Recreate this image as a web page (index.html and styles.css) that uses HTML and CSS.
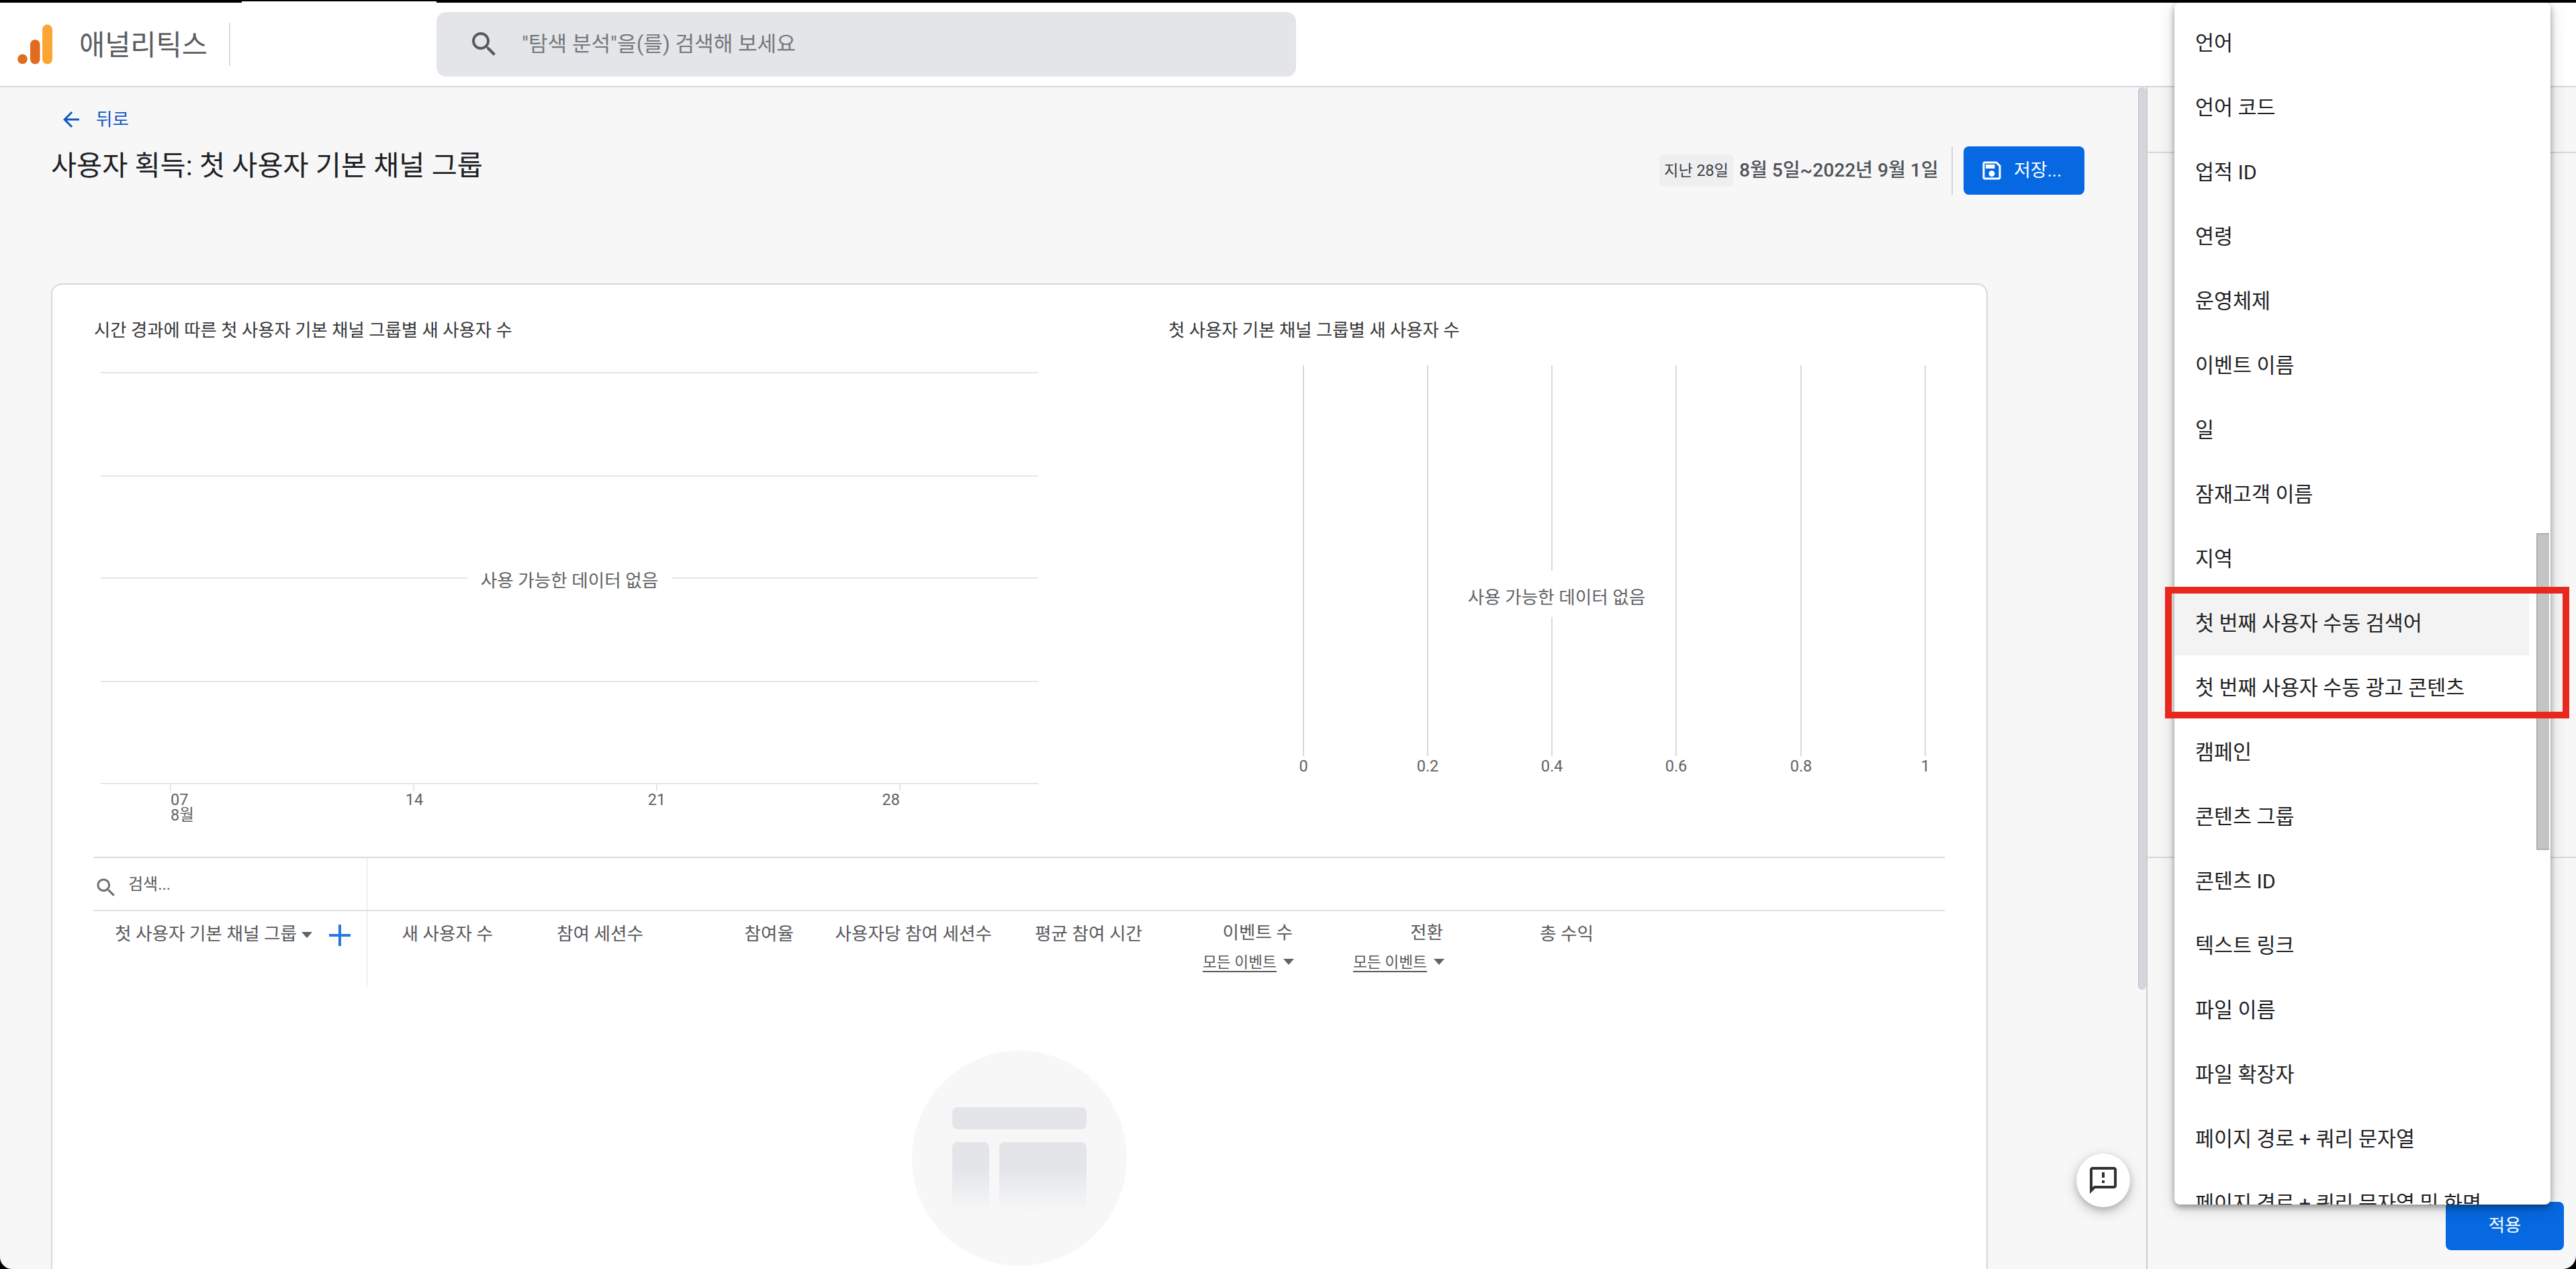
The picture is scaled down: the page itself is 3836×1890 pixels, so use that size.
FILE: index.html
```html
<!DOCTYPE html>
<html lang="ko">
<head>
  <meta charset="UTF-8">
  <meta name="viewport" content="width=device-width, initial-scale=1.0">
  <title>애널리틱스</title>
  <link rel="stylesheet" href="styles.css">
</head>
<body>
  <div class="tab-strip"><div class="active-tab"></div></div>
  <div class="window">
    <header class="header">
      <svg class="logo" width="52" height="60" viewBox="0 0 52 60">
        <circle cx="7.5" cy="52" r="7.3" fill="#e06c22"/>
        <rect x="19" y="23" width="14.5" height="36.5" rx="7.2" fill="#e06c22"/>
        <rect x="37" y="0.5" width="15" height="59" rx="7.5" fill="#fba634"/>
      </svg>
      <span class="brand">애널리틱스</span>
      <div class="search">
        <svg class="search-icon" width="48" height="48" viewBox="0 0 24 24" fill="#57595c">
          <path d="M15.5 14h-.79l-.28-.27C15.41 12.59 16 11.11 16 9.5 16 5.91 13.09 3 9.5 3S3 5.91 3 9.5 5.91 16 9.5 16c1.61 0 3.09-.59 4.23-1.57l.27.28v.79l5 4.99L20.49 19l-4.99-5zm-6 0C7.01 14 5 11.99 5 9.5S7.01 5 9.5 5 14 7.01 14 9.5 11.99 14 9.5 14z"/>
        </svg>
        <span>"탐색 분석"을(를) 검색해 보세요</span>
      </div>
    </header>

    <div class="body">
      <main class="main">
        <a class="back">
          <svg width="36" height="36" viewBox="0 0 24 24" fill="#1259c3">
            <path d="M20 11H7.83l5.59-5.59L12 4l-8 8 8 8 1.41-1.41L7.83 13H20v-2z"/>
          </svg>
          <span>뒤로</span>
        </a>
        <div class="title-row">
          <h1>사용자 획득: 첫 사용자 기본 채널 그룹</h1>
          <div class="actions">
            <span class="chip">지난 28일</span>
            <span class="date">8월 5일~2022년 9월 1일</span>
            <button class="save">
              <svg width="36" height="36" viewBox="0 0 24 24" fill="#fff">
                <path d="M17 3H5c-1.11 0-2 .9-2 2v14c0 1.1.89 2 2 2h14c1.1 0 2-.9 2-2V7l-4-4zm2 16H5V5h11.17L19 7.83V19zm-7-7c-1.66 0-3 1.34-3 3s1.34 3 3 3 3-1.34 3-3-1.34-3-3-3zM6 6h9v4H6z"/>
              </svg>
              <span>저장...</span>
            </button>
          </div>
        </div>

        <section class="card">
          <div class="charts">
            <div class="chart chart-line">
              <h2>시간 경과에 따른 첫 사용자 기본 채널 그룹별 새 사용자 수</h2>
              <svg width="1420" height="700" viewBox="0 0 1420 700">
                <g fill="#e6e6e6">
                  <rect x="10" y="36" width="1396" height="2"/>
                  <rect x="10" y="190" width="1396" height="2"/>
                  <rect x="10" y="342" width="546" height="2"/>
                  <rect x="860" y="342" width="546" height="2"/>
                  <rect x="10" y="496" width="1396" height="2"/>
                  <rect x="10" y="648" width="1396" height="2"/>
                  <rect x="113" y="650" width="2" height="10"/>
                  <rect x="475" y="650" width="2" height="10"/>
                  <rect x="837" y="650" width="2" height="10"/>
                  <rect x="1199" y="650" width="2" height="10"/>
                </g>
                <text class="no-data" x="708" y="356" text-anchor="middle">사용 가능한 데이터 없음</text>
                <g class="axis">
                  <text x="114" y="681">07</text>
                  <text x="114" y="704">8월</text>
                  <text x="477" y="681" text-anchor="middle">14</text>
                  <text x="838" y="681" text-anchor="middle">21</text>
                  <text x="1200" y="681" text-anchor="end">28</text>
                </g>
              </svg>
            </div>
            <div class="chart chart-bar">
              <h2>첫 사용자 기본 채널 그룹별 새 사용자 수</h2>
              <svg width="1156" height="700" viewBox="0 0 1156 700">
                <g fill="#d9d9d9">
                  <rect x="200" y="26" width="2" height="582"/>
                  <rect x="385" y="26" width="2" height="582"/>
                  <rect x="570" y="26" width="2" height="306"/>
                  <rect x="570" y="401" width="2" height="207"/>
                  <rect x="755" y="26" width="2" height="582"/>
                  <rect x="941" y="26" width="2" height="582"/>
                  <rect x="1126" y="26" width="2" height="582"/>
                </g>
                <text class="no-data" x="578" y="381" text-anchor="middle">사용 가능한 데이터 없음</text>
                <g class="axis" text-anchor="middle">
                  <text x="201" y="631">0</text>
                  <text x="386" y="631">0.2</text>
                  <text x="571" y="631">0.4</text>
                  <text x="756" y="631">0.6</text>
                  <text x="942" y="631">0.8</text>
                  <text x="1127" y="631">1</text>
                </g>
              </svg>
            </div>
          </div>

          <div class="table">
            <div class="table-search">
              <div class="dimension-col">
                <svg width="36" height="36" viewBox="0 0 24 24" fill="#6d7073">
                  <path d="M15.5 14h-.79l-.28-.27C15.41 12.59 16 11.11 16 9.5 16 5.91 13.09 3 9.5 3S3 5.91 3 9.5 5.91 16 9.5 16c1.61 0 3.09-.59 4.23-1.57l.27.28v.79l5 4.99L20.49 19l-4.99-5zm-6 0C7.01 14 5 11.99 5 9.5S7.01 5 9.5 5 14 7.01 14 9.5 11.99 14 9.5 14z"/>
                </svg>
                <span>검색...</span>
              </div>
            </div>
            <div class="table-head">
              <div class="dimension-col">
                <span>첫 사용자 기본 채널 그룹</span>
                <i class="caret"></i>
                <i class="plus"></i>
              </div>
              <div class="col col-first">새 사용자 수</div>
              <div class="col">참여 세션수</div>
              <div class="col">참여율</div>
              <div class="col col-wide">사용자당 참여 세션수</div>
              <div class="col">평균 참여 시간</div>
              <div class="col col-event">이벤트 수<div class="event"><u>모든 이벤트</u><i class="caret"></i></div></div>
              <div class="col col-event">전환<div class="event"><u>모든 이벤트</u><i class="caret"></i></div></div>
              <div class="col">총 수익</div>
            </div>
          </div>

          <svg class="empty" width="320" height="320" viewBox="0 0 320 320">
            <defs>
              <linearGradient id="fade" x1="0" y1="0" x2="0" y2="1">
                <stop offset="0.38" stop-color="#e3e5e9"/>
                <stop offset="1" stop-color="#f7f7f8"/>
              </linearGradient>
            </defs>
            <circle cx="160" cy="160" r="160" fill="#f7f7f8"/>
            <rect x="60" y="84" width="200" height="33" rx="8" fill="#e3e5e9"/>
            <rect x="60" y="136" width="55" height="104" rx="8" fill="url(#fade)"/>
            <rect x="130" y="136" width="130" height="104" rx="8" fill="url(#fade)"/>
          </svg>
        </section>
      </main>

      <div class="scrollbar"><div class="scroll-thumb"></div></div>

      <aside class="side">
        <div class="side-title"></div>
        <div class="side-section"></div>
        <button class="apply">적용</button>
      </aside>
    </div>

    <button class="feedback">
      <svg width="48" height="48" viewBox="0 0 24 24" fill="#303134">
        <path d="M20 2H4c-1.1 0-1.99.9-1.99 2L2 22l4-4h14c1.1 0 2-.9 2-2V4c0-1.1-.9-2-2-2zm0 14H5.17L4 17.17V4h16v12zm-9-4h2v2h-2zm0-6h2v4h-2z"/>
      </svg>
    </button>

    <div class="menu">
      <ul>
        <li>언어</li>
        <li>언어 코드</li>
        <li>업적 ID</li>
        <li>연령</li>
        <li>운영체제</li>
        <li>이벤트 이름</li>
        <li>일</li>
        <li>잠재고객 이름</li>
        <li>지역</li>
        <li class="active">첫 번째 사용자 수동 검색어</li>
        <li>첫 번째 사용자 수동 광고 콘텐츠</li>
        <li>캠페인</li>
        <li>콘텐츠 그룹</li>
        <li>콘텐츠 ID</li>
        <li>텍스트 링크</li>
        <li>파일 이름</li>
        <li>파일 확장자</li>
        <li>페이지 경로 + 쿼리 문자열</li>
        <li>페이지 경로 + 쿼리 문자열 및 화면</li>
      </ul>
      <div class="menu-thumb"></div>
    </div>
    <div class="highlight"></div>
  </div>
</body>
</html>
```

FILE: styles.css
```css
* {
  box-sizing: border-box;
}
body {
  margin: 0;
  height: 1890px;
  overflow: hidden;
  background: #000;
  font-family: Roboto, "Noto Sans CJK KR", sans-serif;
  font-size: 26.6px;
  line-height: 1.2;
  color: #202124;
}
h1, h2, ul {
  margin: 0;
  padding: 0;
  font-weight: 400;
}
button {
  border: none;
  padding: 0;
  font-family: inherit;
  line-height: 1.2;
}
svg {
  display: block;
  flex: none;
}
.tab-strip {
  height: 4px;
  padding: 2px 0 0 360px;
}
.active-tab {
  width: 290px;
  height: 2px;
  background: #fff;
}
.window {
  position: relative;
  height: 1886px;
  overflow: hidden;
  display: flex;
  flex-direction: column;
  background: #f7f7f8;
  border-radius: 0 0 20px 18px;
}

/* header */
.header {
  flex: none;
  height: 126px;
  display: flex;
  align-items: flex-start;
  background: #fff;
  border-bottom: 2px solid #d3d6da;
}
.logo {
  margin: 32px 0 0 26px;
}
.brand {
  width: 225px;
  height: 64px;
  margin: 30px 0 0 40px;
  border-right: 2px solid #dadce0;
  line-height: 67px;
  font-size: 41.5px;
  color: #5a5c5f;
}
.search {
  width: 1280px;
  height: 96px;
  margin: 14px 0 0 307px;
  padding-left: 47px;
  display: flex;
  align-items: center;
  gap: 32px;
  border-radius: 14px;
  background: #e3e5e9;
  font-size: 31.1px;
  color: #75787b;
}

/* report */
.body {
  flex: 1;
  min-height: 0;
  display: flex;
}
.main {
  width: 3184px;
  padding-left: 76px;
}
.back {
  height: 60px;
  margin-top: 18px;
  padding-left: 12px;
  display: flex;
  align-items: center;
  gap: 19px;
  font-size: 26.6px;
  color: #1259c3;
}
.title-row {
  width: 3028px;
  height: 92px;
  margin-top: 4px;
  display: flex;
  justify-content: space-between;
}
.title-row h1 {
  line-height: 70px;
  font-size: 41.4px;
}
.actions {
  height: 72px;
  margin-top: 6px;
  display: flex;
  align-items: center;
}
.chip {
  width: 110px;
  height: 48px;
  border-radius: 6px;
  background: #eeeff1;
  line-height: 48px;
  text-align: center;
  font-size: 23.2px;
  color: #3c4043;
}
.date {
  width: 327px;
  height: 72px;
  padding-left: 9px;
  border-right: 2px solid #d3d6da;
  line-height: 72px;
  white-space: nowrap;
  font-size: 28.1px;
  font-weight: 500;
  color: #505357;
}
.save {
  width: 180px;
  height: 72px;
  margin-left: 16px;
  padding-left: 24px;
  display: flex;
  align-items: center;
  gap: 15px;
  border-radius: 8px;
  background: #0669e1;
  color: #fff;
  font-size: 27px;
}

/* card */
.card {
  width: 2884px;
  height: 1500px;
  margin-top: 118px;
  padding: 0 62px;
  border: 2px solid #d5d7d9;
  border-radius: 16px;
  background: #fff;
}
.charts {
  height: 852px;
  padding-top: 44px;
  display: flex;
  gap: 180px;
}
.chart h2 {
  height: 50px;
  line-height: 48px;
  font-size: 26.35px;
  color: #35373a;
}
.chart svg {
  overflow: visible;
}
.no-data {
  font-size: 26.6px;
  fill: #616366;
}
.axis {
  font-size: 23.5px;
  fill: #5f6164;
}

/* table */
.table {
  width: 2756px;
  border-top: 2px solid #d9d9d9;
  color: #57595c;
}
.table-search {
  height: 79px;
  display: flex;
  border-bottom: 2px solid #e0e0e0;
}
.table-search .dimension-col {
  gap: 15px;
  padding-top: 2px;
  font-size: 24px;
}
.table-search svg {
  margin-top: 8px;
}
.table-head {
  height: 113px;
  display: flex;
  line-height: 68px;
}
.dimension-col {
  flex: none;
  width: 407px;
  display: flex;
  align-items: center;
  border-right: 1px solid #e0e0e0;
}
.table-head .dimension-col {
  align-items: flex-start;
  padding-left: 31px;
}
.caret {
  border: 8px solid transparent;
  border-top: 9px solid #616366;
  border-bottom: 0;
}
.dimension-col .caret {
  margin: 31px 0 0 7px;
}
.plus {
  width: 32px;
  height: 32px;
  margin: 20px 0 0 25px;
  background:
    linear-gradient(#2577e3, #2577e3) center / 4px 100% no-repeat,
    linear-gradient(#2577e3, #2577e3) center / 100% 4px no-repeat;
}
.col {
  flex: none;
  width: 224px;
  text-align: right;
}
.col-first {
  width: 187px;
}
.col-wide {
  width: 295px;
}
.col-event {
  padding-top: 14px;
  line-height: 36px;
}
.event {
  height: 40px;
  margin: 8px -2px 0 0;
  display: flex;
  justify-content: flex-end;
  align-items: center;
  gap: 10px;
  font-size: 22.7px;
}
.event u {
  line-height: 24px;
  border-bottom: 2px solid #57595c;
  text-decoration: none;
}
.event .caret {
  margin-bottom: 6px;
}
.empty {
  margin: 95px 0 0 1218px;
}

/* scrollbar between report and side panel */
.scrollbar {
  width: 12px;
}
.scroll-thumb {
  height: 1344px;
  border-left: 1px solid #bbbec2;
  border-radius: 6px;
  background: #d3d6da;
}

/* side panel */
.side {
  flex: 1;
  display: flex;
  flex-direction: column;
  border-left: 2px solid #cbcdd0;
}
.side-title {
  height: 98px;
  border-bottom: 2px solid #d5d7d9;
}
.side-section {
  height: 1050px;
  border-bottom: 2px solid #d5d7d9;
}
.apply {
  align-self: flex-end;
  width: 176px;
  height: 72px;
  margin: 512px 18px 0 0;
  border-radius: 8px;
  background: #0669e1;
  color: #fff;
  font-size: 26.4px;
}

/* overlays */
.feedback {
  position: absolute;
  left: 3092px;
  top: 1714px;
  width: 80px;
  height: 80px;
  display: flex;
  align-items: center;
  justify-content: center;
  border-radius: 50%;
  background: #fff;
  box-shadow: 0 6px 20px rgba(0, 0, 0, 0.22), 0 4px 8px rgba(0, 0, 0, 0.14);
}
.menu {
  position: absolute;
  left: 3238px;
  top: 0;
  width: 560px;
  height: 1790px;
  padding-top: 12px;
  overflow: hidden;
  border-radius: 8px;
  background: #fff;
  box-shadow: 0 4px 10px rgba(0, 0, 0, 0.38), 0 6px 28px rgba(0, 0, 0, 0.14);
}
.menu ul {
  width: 528px;
  list-style: none;
}
.menu li {
  height: 96px;
  padding-left: 31px;
  line-height: 97px;
  white-space: nowrap;
  font-size: 30.4px;
}
.menu .active {
  background: #f3f3f3;
}
.menu-thumb {
  position: absolute;
  right: 2px;
  top: 790px;
  width: 19px;
  height: 472px;
  border: 2px solid #aeaeae;
  border-right: none;
  background: #c4c4c4;
}
.highlight {
  position: absolute;
  left: 3224px;
  top: 870px;
  width: 602px;
  height: 196px;
  border: 10px solid #e9281d;
}
```
